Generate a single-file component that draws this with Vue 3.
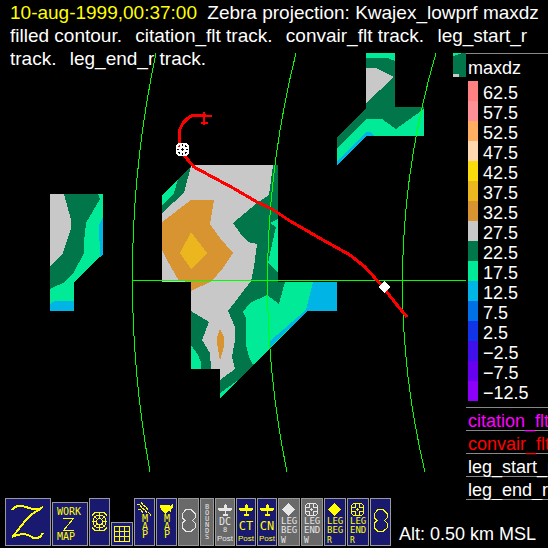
<template>
  <div class="display">
    <header class="title">
      <time class="stamp">10-aug-1999,00:37:00</time>
      {{ ' ' }}
      <template v-for="layer in layers" :key="layer">
        <span class="layer">{{ layer }}</span>{{ ' ' }}
      </template>
    </header>

    <main class="plot">
      <svg class="map" viewBox="0 53 466 447" shape-rendering="crispEdges">
        <!-- contour cells -->
        <polygon
          v-for="(cell, i) in cells"
          :key="i"
          :class="cell[0]"
          :points="cell[1]"
        />

        <!-- range rings -->
        <g class="grid-lines">
          <path d="M156 53Q112 262 150 472" />
          <path d="M296 53Q244 262 287 472" />
          <path d="M436 53Q375 262 425 472" />
          <path d="M133 280.5H466" />
        </g>

        <!-- convair track with its plane -->
        <g class="track">
          <path d="M206 115.500H192L188 118 183 123 179.500 130V145L182 153 194 167 233 188 257 202 272 209 290 221 323 240 350 255 365 267 383 287 397 305 407 317" />
          <path class="plane" d="M196 116H212M204 112V125M201 123H208" />
        </g>

        <!-- leg end marker -->
        <path class="marker-frame" d="M179 144H186L188 146V153L186 155H179L177 153V146Z" />
        <path class="white" d="M180 143H185V147H189V152H185V156H180V152H176V147H180Z" />
        <path class="marker-lines" d="M182.5 144V146M182.5 148V151M182.5 153V155M177 149.5H179M181 149.5H184M186 149.5H188" />
        <!-- leg start marker -->
        <polygon class="white" points="384,281 390,287 384,293 378,287" />
      </svg>

      <aside class="legend">
        <section class="scale">
          <h2>maxdz</h2>
          <ul>
            <li v-for="level in levels" :key="level.value">
              <span class="swatch" :style="{ background: level.color }"></span>{{ level.value }}
            </li>
          </ul>
        </section>
        <p class="magenta">citation_flt</p>
        <p class="red">convair_flt</p>
        <p>leg_start_r</p>
        <p>leg_end_r</p>
      </aside>
    </main>

    <footer class="icon-bar">
      <button
        v-for="(icon, i) in icons"
        :key="i"
        type="button"
        :class="{ off: icon.off }"
        :aria-label="icon.name"
      >
        <svg
          :width="icon.w - 2"
          :height="(icon.h || 48) - 2"
          :viewBox="`1 1 ${icon.w - 2} ${(icon.h || 48) - 2}`"
          shape-rendering="crispEdges"
        >
          <path
            v-for="(shape, n) in icon.shapes"
            :key="n"
            :d="shape.d"
            :class="shape.kind"
          />
          <text
            v-for="(t, n) in icon.texts"
            :key="'t' + n"
            :x="t[1]"
            :y="t[2]"
            :class="t[3]"
          >{{ t[0] }}</text>
        </svg>
      </button>
      <span class="alt">Alt: 0.50 km MSL</span>
    </footer>
  </div>
</template>

<script setup>
const layers = [
  'Zebra projection: Kwajex_lowprf maxdz filled contour.',
  'citation_flt track.',
  'convair_flt track.',
  'leg_start_r track.',
  'leg_end_r track.'
]

const levels = [
  { value: '62.5', color: '#ff8080' },
  { value: '57.5', color: '#ff9095' },
  { value: '52.5', color: '#ffae62' },
  { value: '47.5', color: '#ffd8b0' },
  { value: '42.5', color: '#fadb0c' },
  { value: '37.5', color: '#ecb61e' },
  { value: '32.5', color: '#d89430' },
  { value: '27.5', color: '#c8c8c8' },
  { value: '22.5', color: '#00764a' },
  { value: '17.5', color: '#00ea98' },
  { value: '12.5', color: '#00b4e6' },
  { value: '7.5', color: '#0070e6' },
  { value: '2.5', color: '#1034e6' },
  { value: '\u22122.5', color: '#4010ea' },
  { value: '\u22127.5', color: '#6800f0' },
  { value: '\u221212.5', color: '#8c00fa' }
]

// [level class, polygon], painted in order
const cells = [
  // centre
  ['l27', '162,195 192,165 278,165 278,282 337,282 337,311 308,311 220,398 220,369 191,369 191,282 162,282'],
  ['l22', '162,195 191,166 184,193 174,202 162,213'],
  ['l17', '162,195 178,179 174,193 162,205'],
  ['l22', '273,165 278,165 278,282 337,282 337,311 308,311 220,398 220,380 235,369 232,357 235,340 235,327 228,311 251,281 254,267 257,244 248,242 240,233 233,223 257,203 269,195'],
  ['l17', '285,282 279,304 267,295 250,303 243,312 246,318 246,345 249,357 253,365 308,311 337,311 337,282'],
  ['l17', '220,393 237,381 220,398'],
  ['l17', '278,219 270,223 276,227 273,240 268,263 278,273'],
  ['l12', '313,282 337,282 337,311 308,311 270,347 270,341 306,310'],
  ['l32', '162,222 191,200 214,200 210,224 220,238 233,253 223,268 212,281 191,291 191,282 179,281 167,260 162,250'],
  ['l37', '191,232 207,253 191,269 180,253'],
  ['l32', '220,329 224,337 224,346 220,361 217,343 217,338'],
  ['l22', '191,311 209,322 202,340 210,353 211,369 191,369'],
  ['l17', '191,345 198,355 201,362 201,369 191,369'],
  // upper right
  ['l22', '366,53 395,53 395,107 424,107 424,136 366,136 337,165 337,137 366,108'],
  ['l17', '366,53 395,53 395,61 388,58 366,58'],
  ['l27', '366,68 376,68 394,77 366,103'],
  ['l17', '337,149 366,119 382,119 396,129 424,109 424,136 366,136 337,165'],
  ['l12', '337,162 366,132 370,132 374,136 367,136 337,165'],
  ['l22', '453,53 466,53 466,77 453,77'],
  ['l17', '453,53 463,53 453,56'],
  ['l27', '453,74 459,74 459,77 453,77'],
  // left
  ['l17', '50,194 103,194 103,254 74,282 74,311 50,311'],
  ['l22', '50,194 98,194 100,199 86,223 84,242 84,253 74,272 65,282 50,289'],
  ['l27', '50,194 64,194 71,220 71,229 63,253 50,266'],
  ['l12', '103,217 99,225 100,257 103,254'],
  ['l12', '50,304 55,301 74,301 74,311 50,311']
]

const plane = [
  { d: 'M9 7H10V6H11V7H12V10H17V12H16V13H11V16H13V18H8V16H10V13H4V12H3V10H9Z', kind: 'solid' }
]
const ring = [
  { d: 'M8 11.5H13L17 15.5V20L14.5 22.5 17 25V30L13 33.5H8L4.5 30V25L7 22.5 4.5 20V15.5Z', kind: 'line' }
]
const diamond = [{ d: 'M10.5 5L17 11.5 10.5 18 4 11.5Z', kind: 'solid' }]
const cross = [
  { d: 'M6.5 5.5H14.5L16.5 7.5V15.5L14.5 17.5H6.5L4.5 15.5V7.5Z', kind: 'line' },
  { d: 'M8.5 5V9.5H4M12.5 5V9.5H17M8.5 18V13.5H4M12.5 18V13.5H17M10.5 10V13M9 11.5H12', kind: 'line' }
]
const stacked = [['M', 11, 24, 'mid'], ['A', 11, 32, 'mid'], ['P', 11, 40, 'mid']]
const leg = (kind, radar) => [[kind[0], 3, 26, 'small'], [kind[1], 3, 35, 'small'], [radar, 3, 45, 'tiny']]

const icons = [
  {
    name: 'Zebra',
    w: 46,
    shapes: [
      { d: 'M7 12C10 6 19 8 24 10S34 12 38 9', kind: 'thick' },
      { d: 'M37 10C31 13 24 18 20 23S12 34 7 39', kind: 'thick' },
      { d: 'M7 39C13 36 21 35 25 38S34 42 38 35', kind: 'thick' }
    ]
  },
  {
    name: 'Work map',
    w: 36,
    h: 44,
    shapes: [{ d: 'M11 16.5H21.5L11.5 28.5H22', kind: 'line' }],
    texts: [['WORK', 5, 13, 'word'], ['MAP', 5, 38, 'word']]
  },
  {
    name: 'Radar',
    w: 21,
    shapes: [
      { d: 'M7.5 23.5a3 3 0 1 0 6 0a3 3 0 1 0-6 0M4 23.5a6.500 6.500 0 1 0 13 0a6.500 6.500 0 1 0-13 0', kind: 'line' },
      { d: 'M3 17.5L6 14.5H15L18 17.5M3 29.5L6 32.5H15L18 29.5M10.5 15V21M10.5 26V32M3 23.5H8M13 23.5H18', kind: 'line' },
      { d: 'M5 18L8 21M16 18L13 21M5 29L8 26M16 29L13 26', kind: 'line' }
    ]
  },
  {
    name: 'Grid',
    w: 22,
    h: 24,
    shapes: [{ d: 'M3.5 4.5H18.5V19.5H3.5ZM8.5 4V20M13.5 4V20M3 9.5H19M3 14.5H19', kind: 'line' }]
  },
  {
    name: 'Track map',
    w: 21,
    shapes: [{ d: 'M3 6L6 7 8 10 11 12 13 15M7 4L9 7 12 9 14 12M4 11L7 12 9 15M14 14L16 16V18', kind: 'line' }],
    texts: stacked
  },
  {
    name: 'US map',
    w: 21,
    shapes: [{ d: 'M4 7H13L14 8 17 6V9L15 11V15L13 13 11 14 10 16 7 14 5 12Z', kind: 'solid' }],
    texts: stacked
  },
  { name: 'Rings', w: 21, off: true, shapes: ring },
  {
    name: 'Bounds',
    w: 14,
    off: true,
    texts: 'BOUNDS'.split('').map((c, i) => [c, 7, 11 + i * 6, 'bounds'])
  },
  {
    name: 'DC8 position',
    w: 20,
    off: true,
    shapes: plane,
    texts: [['DC', 10, 27, 'mid'], ['8', 10, 34, 'bounds'], ['Post', 10, 43, 'post']]
  },
  { name: 'Citation position', w: 20, shapes: plane, texts: [['CT', 10, 32, 'big'], ['Post', 10, 43, 'post']] },
  { name: 'Convair position', w: 20, shapes: plane, texts: [['CN', 10, 32, 'big'], ['Post', 10, 43, 'post']] },
  { name: 'Leg begin W', w: 22, off: true, shapes: diamond, texts: leg(['LEG', 'BEG'], 'W') },
  { name: 'Leg end W', w: 22, off: true, shapes: cross, texts: leg(['LEG', 'END'], 'W') },
  { name: 'Leg begin R', w: 22, shapes: diamond, texts: leg(['LEG', 'BEG'], 'R') },
  { name: 'Leg end R', w: 22, shapes: cross, texts: leg(['LEG', 'END'], 'R') },
  { name: 'Range rings', w: 21, shapes: ring }
]
</script>

<style>
body {
  margin: 0;
  background: #000;
}
</style>

<style scoped>
.display {
  position: relative;
  min-height: 100vh;
  overflow: hidden;
  background: #000;
  color: #fff;
  font: 18px/23px "Liberation Sans", Arial, sans-serif;
}

/* the last title line runs over the top of the map */
.title {
  position: absolute;
  top: 0;
  left: 0;
  right: 0;
  padding: 1px 4px 1px 10px;
  font-size: 19px;
}

.stamp {
  margin-right: 5px;
  color: #ff0;
}

.layer {
  margin-right: 8px;
}

.plot {
  display: flex;
  align-items: flex-start;
  padding-top: 53px;
}

.map {
  flex: 1;
  min-width: 0;
}

.l12 { fill: #00b4e6; }
.l17 { fill: #00ea98; }
.l22 { fill: #00764a; }
.l27 { fill: #c8c8c8; }
.l32 { fill: #d89430; }
.l37 { fill: #ecb61e; }
.white { fill: #fff; }

.grid-lines {
  fill: none;
  stroke: #0f0;
}

.track {
  fill: none;
  stroke: #f00;
  stroke-width: 3;
}

.plane {
  stroke-width: 2;
}

.marker-frame {
  fill: none;
  stroke: #fff;
  stroke-width: 2;
}

.marker-lines {
  fill: none;
  stroke: #000;
}

.legend {
  flex: 0 0 82px;
  overflow: hidden;
  white-space: nowrap;
}

.scale {
  padding: 2px 0 6px 2px;
  border-top: 1px solid #888;
  border-bottom: 1px solid #888;
}

.scale h2 {
  margin: 0;
  font-size: 18px;
  font-weight: normal;
  line-height: 25px;
}

.scale ul {
  margin: 0;
  padding: 0;
  list-style: none;
}

.scale li {
  display: flex;
  gap: 5px;
  height: 20px;
  line-height: 24px;
}

.swatch {
  width: 10px;
}

.legend p {
  height: 22px;
  margin: 0;
  padding-left: 2px;
  border-bottom: 1px solid #888;
  line-height: 26px;
}

.magenta { color: #f0f; }
.red { color: #f00; }

.icon-bar {
  display: flex;
  align-items: flex-end;
  gap: 1px;
  margin-top: -2px;
  padding: 0 5px 2px;
}

.icon-bar button {
  flex: none;
  padding: 0;
  border: 1px solid #999;
  background: #191970;
  color: #ff0;
}

.icon-bar button.off {
  background: #696969;
  color: #e6e6e6;
}

.icon-bar svg {
  display: block;
  fill: currentColor;
  font-family: "DejaVu Sans Mono", monospace;
}

.icon-bar .line {
  fill: none;
  stroke: currentColor;
}

.icon-bar .thick {
  fill: none;
  stroke: currentColor;
  stroke-width: 2;
}

.word { font-size: 10px; }
.small { font-size: 9px; }
.tiny { font-size: 8px; }

.mid {
  font-size: 10px;
  text-anchor: middle;
}

.bounds {
  font-size: 7px;
  text-anchor: middle;
}

.big {
  font-size: 12px;
  text-anchor: middle;
}

.post {
  font-size: 8px;
  font-family: "Liberation Sans", sans-serif;
  text-anchor: middle;
}

.alt {
  margin-left: 7px;
  white-space: nowrap;
}
</style>
